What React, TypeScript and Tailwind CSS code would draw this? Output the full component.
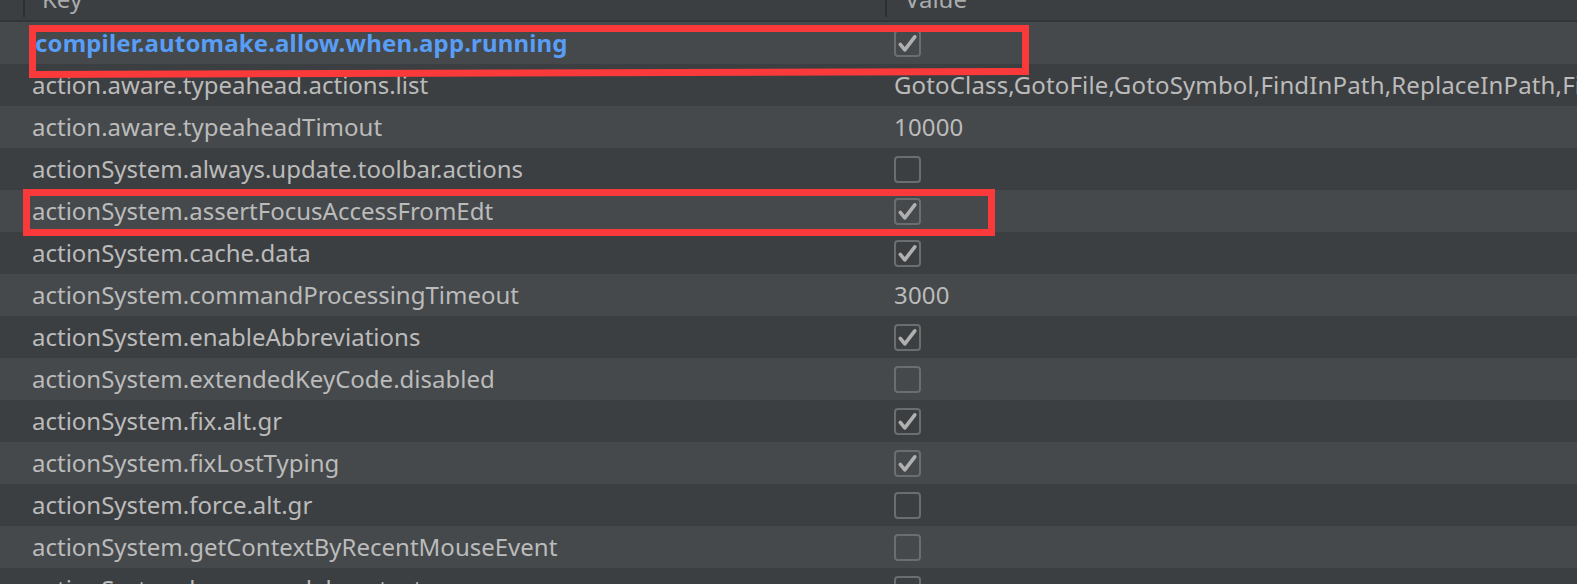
import React from "react";

type Row = { key: string; value: string | boolean; modified?: boolean };

const rows: Row[] = [
  { key: "compiler.automake.allow.when.app.running", value: true, modified: true },
  { key: "action.aware.typeahead.actions.list", value: "GotoClass,GotoFile,GotoSymbol,FindInPath,ReplaceInPath,FileStructurePopup,GotoAction" },
  { key: "action.aware.typeaheadTimout", value: "10000" },
  { key: "actionSystem.always.update.toolbar.actions", value: false },
  { key: "actionSystem.assertFocusAccessFromEdt", value: true },
  { key: "actionSystem.cache.data", value: true },
  { key: "actionSystem.commandProcessingTimeout", value: "3000" },
  { key: "actionSystem.enableAbbreviations", value: true },
  { key: "actionSystem.extendedKeyCode.disabled", value: false },
  { key: "actionSystem.fix.alt.gr", value: true },
  { key: "actionSystem.fixLostTyping", value: true },
  { key: "actionSystem.force.alt.gr", value: false },
  { key: "actionSystem.getContextByRecentMouseEvent", value: false },
  { key: "actionSystem.honor.modal.context", value: false },
];

function Checkbox({ checked }: { checked: boolean }) {
  return (
    <div className="relative w-[27px] h-[27px] rounded-[4px] border-2 border-[#6b6d6f] shrink-0">
      {checked && (
        <svg
          className="absolute left-[-2px] top-[-2px]"
          width="27"
          height="27"
          viewBox="0 0 27 27"
        >
          <path
            d="M6.3 14.3 L10.8 19.8 L20.8 6.8"
            fill="none"
            stroke="#b0b0b0"
            strokeWidth="3.6"
            strokeLinecap="round"
            strokeLinejoin="round"
          />
        </svg>
      )}
    </div>
  );
}

export default function App() {
  return (
    <div className="relative w-[1577px] h-[584px] overflow-hidden bg-[#3c3f41] font-['Noto_Sans',sans-serif] text-[24px] text-[#bbbbbb]">
      {/* Header */}
      <div className="flex h-[22px] border-b-2 border-[#323436] bg-[#3c3f41] overflow-hidden">
        <div className="w-[25px] shrink-0 flex justify-end">
          <div className="w-[2px] h-[17px] bg-[#2d2f31]" />
        </div>
        <div className="w-[862px] shrink-0 flex justify-between">
          <div className="pl-[17px] mt-[-22px] h-[42px] leading-[42px] text-[#a9abad]">Key</div>
          <div className="w-[2px] h-[17px] bg-[#2d2f31]" />
        </div>
        <div className="flex-1">
          <div className="pl-[18px] mt-[-22px] h-[42px] leading-[42px] text-[#a9abad]">Value</div>
        </div>
      </div>

      {/* Rows */}
      <div className="flex flex-col">
        {rows.map((r, i) => (
          <div
            key={r.key}
            className={
              "flex h-[42px] shrink-0 leading-[42px] " +
              (i % 2 === 0 ? "bg-[#45494b]" : "bg-[#3c3f41]")
            }
          >
            <div className="w-[25px] shrink-0" />
            <div className="w-[862px] shrink-0 pl-[7px] whitespace-nowrap overflow-hidden">
              {r.modified ? (
                <span className="ml-[3px] font-bold text-[#589df6] tracking-[0.15px]">{r.key}</span>
              ) : (
                <span>{r.key}</span>
              )}
            </div>
            <div className="flex-1 pl-[7px] flex items-center whitespace-nowrap overflow-hidden">
              {typeof r.value === "boolean" ? (
                <Checkbox checked={r.value} />
              ) : (
                <span className="tracking-[0.15px]">{r.value}</span>
              )}
            </div>
          </div>
        ))}
      </div>

      {/* Red annotation rectangles */}
      <svg
        className="absolute left-0 top-0 pointer-events-none"
        width="1577"
        height="584"
        viewBox="0 0 1577 584"
      >
        <path
          d="M32.5 28.5 L1025.5 28.5 L1025.5 71.5 L32.5 74.5 Z"
          fill="none"
          stroke="#fa3a3a"
          strokeWidth="7"
        />
        <rect x="26.5" y="192.5" width="965" height="40" fill="none" stroke="#fa3a3a" strokeWidth="7" />
      </svg>
    </div>
  );
}
